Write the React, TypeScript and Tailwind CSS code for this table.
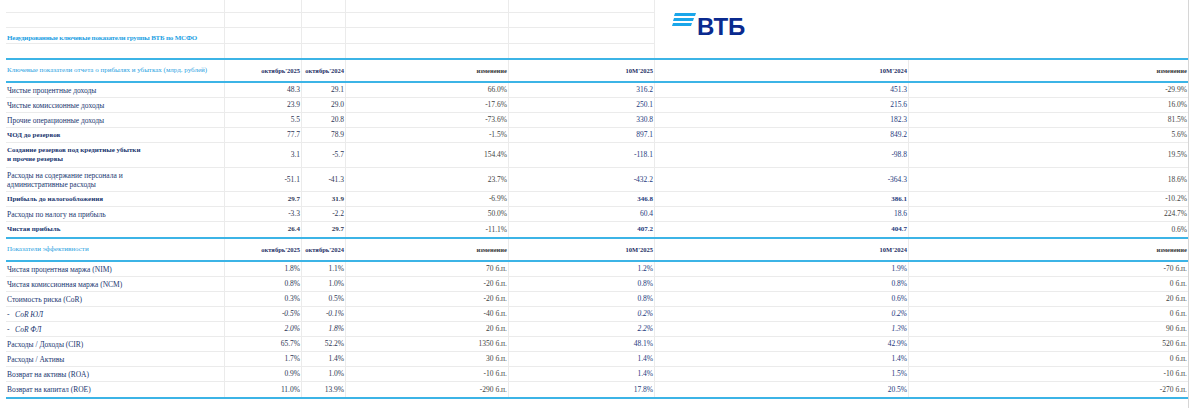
import React from "react";

type Row = {
  label: string[];
  v: string[];
  bold?: boolean;
  boldVals?: boolean;
  italic?: boolean;
  h?: string;
};

const GRID = "grid grid-cols-[219px_77px_44px_163px_146px_254px_279px]";
const LINE = "border-[#ebebeb]";
const BLUE = "border-[#3cb4e6]";

const income: Row[] = [
  { label: ["Чистые процентные доходы"], v: ["48.3", "29.1", "66.0%", "316.2", "451.3", "-29.9%"] },
  { label: ["Чистые комиссионные доходы"], v: ["23.9", "29.0", "-17.6%", "250.1", "215.6", "16.0%"] },
  { label: ["Прочие операционные доходы"], v: ["5.5", "20.8", "-73.6%", "330.8", "182.3", "81.5%"] },
  { label: ["ЧОД до резервов"], v: ["77.7", "78.9", "-1.5%", "897.1", "849.2", "5.6%"], bold: true },
  {
    label: ["Создание резервов под кредитные убытки", "и прочие резервы"],
    v: ["3.1", "-5.7", "154.4%", "-118.1", "-98.8", "19.5%"],
    bold: true,
    h: "h-[25px]",
  },
  {
    label: ["Расходы на содержание персонала и", "административные расходы"],
    v: ["-51.1", "-41.3", "23.7%", "-432.2", "-364.3", "18.6%"],
    h: "h-[24px]",
  },
  { label: ["Прибыль до налогообложения"], v: ["29.7", "31.9", "-6.9%", "346.8", "386.1", "-10.2%"], bold: true, boldVals: true },
  { label: ["Расходы по налогу на прибыль"], v: ["-3.3", "-2.2", "50.0%", "60.4", "18.6", "224.7%"] },
  { label: ["Чистая прибыль"], v: ["26.4", "29.7", "-11.1%", "407.2", "404.7", "0.6%"], bold: true, boldVals: true },
];

const ratios: Row[] = [
  { label: ["Чистая процентная маржа (NIM)"], v: ["1.8%", "1.1%", "70 б.п.", "1.2%", "1.9%", "-70 б.п."] },
  { label: ["Чистая комиссионная маржа (NCM)"], v: ["0.8%", "1.0%", "-20 б.п.", "0.8%", "0.8%", "0 б.п."] },
  { label: ["Стоимость риска (CoR)"], v: ["0.3%", "0.5%", "-20 б.п.", "0.8%", "0.6%", "20 б.п."] },
  { label: ["-   CoR ЮЛ"], v: ["-0.5%", "-0.1%", "-40 б.п.", "0.2%", "0.2%", "0 б.п."], italic: true },
  { label: ["-   CoR ФЛ"], v: ["2.0%", "1.8%", "20 б.п.", "2.2%", "1.3%", "90 б.п."], italic: true },
  { label: ["Расходы / Доходы (CIR)"], v: ["65.7%", "52.2%", "1350 б.п.", "48.1%", "42.9%", "520 б.п."] },
  { label: ["Расходы / Активы"], v: ["1.7%", "1.4%", "30 б.п.", "1.4%", "1.4%", "0 б.п."] },
  { label: ["Возврат на активы (ROA)"], v: ["0.9%", "1.0%", "-10 б.п.", "1.4%", "1.5%", "-10 б.п."] },
  { label: ["Возврат на капитал (ROE)"], v: ["11.0%", "13.9%", "-290 б.п.", "17.8%", "20.5%", "-270 б.п."] },
];

// colour per value column: B, C, D, E, F, G
const valColour = ["text-[#2e3654]", "text-[#2e3654]", "text-[#3f3f3f]", "text-[#24387c]", "text-[#24387c]", "text-[#3f3f3f]"];

function VtbLogo() {
  return (
    <div className="flex items-start pl-[17px]">
      <svg width="24" height="14" viewBox="0 0 24 14" className="mt-[13px]">
        <polygon points="3,0 24,0 23,3 2,3" fill="#1aa6ea" />
        <polygon points="2,5 22,5 21,8 1,8" fill="#1aa6ea" />
        <polygon points="1,10 20,10 19,13 0,13" fill="#1aa6ea" />
      </svg>
      <span className="ml-[1px] mt-[15px] font-['Liberation_Sans',sans-serif] text-[24px] font-bold leading-none text-[#0a2a8f]">
        ВТБ
      </span>
    </div>
  );
}

function Header({ title }: { title: string }) {
  const heads = ["октябрь'2025", "октябрь'2024", "изменение", "10М'2025", "10М'2024", "изменение"];
  return (
    <div className={`${GRID} h-[25px] border-t-2 border-b-2 ${BLUE}`}>
      <div className={`flex items-center pl-[1px] border-r ${LINE} whitespace-nowrap text-[7px] text-[#2aa2df]`}>{title}</div>
      {heads.map((h, i) => (
        <div
          key={i}
          className={`flex items-center justify-end pr-[1px] font-bold whitespace-nowrap text-[6.5px] ${i < 5 ? `border-r ${LINE}` : ""} ${
            i == 2 || i == 5 ? "text-[#3a3a3a]" : "text-[#1f2f66]"
          }`}
        >
          {h}
        </div>
      ))}
    </div>
  );
}

function DataRow({ row, last }: { row: Row; last: boolean }) {
  return (
    <div className={`${GRID} ${row.h ?? "h-[15px]"} ${last ? "" : `border-b ${LINE}`}`}>
      <div
        className={`flex flex-col justify-center pl-[1px] border-r ${LINE} whitespace-pre leading-[9px] text-[#203670] ${
          row.bold ? "font-bold text-[7px]" : ""
        } ${row.italic ? "italic" : ""}`}
      >
        {row.label.map((l, i) => (
          <span key={i}>{l}</span>
        ))}
      </div>
      {row.v.map((v, i) => {
        const main = i != 2 && i != 5;
        return (
          <div
            key={i}
            className={`flex items-center justify-end pr-[1px] whitespace-nowrap ${valColour[i]} ${i < 5 ? `border-r ${LINE}` : ""} ${
              main && row.boldVals ? "font-bold text-[7px]" : ""
            } ${main && row.italic ? "italic" : ""}`}
          >
            {v}
          </div>
        );
      })}
    </div>
  );
}

export default function App() {
  const topRows = ["h-[13px]", "h-[15px]", "h-[16px]", "h-[14px]"];

  return (
    <div className="h-[408px] w-[1200px] bg-white font-['Liberation_Serif',serif] text-[7.5px]">
      <div className="h-full w-[1189px] border-r border-[#d6d6d6] pl-[6px]">
        {/* top block with title and logo */}
        <div className="flex h-[58px]">
          <div className="w-[649px]">
            {topRows.map((h, r) => (
              <div
                key={r}
                className={`grid grid-cols-[219px_77px_44px_163px_146px] ${h} ${r < 3 ? `border-b ${LINE}` : ""}`}
              >
                <div
                  className={`flex items-end pb-[1px] pl-[1px] border-r ${LINE} whitespace-nowrap font-bold text-[7px] leading-none tracking-[-0.2px] text-[#1e9fe3]`}
                >
                  {r == 2 ? "Неаудированные ключевые показатели группы ВТБ по МСФО" : ""}
                </div>
                <div className={`border-r ${LINE}`} />
                <div className={`border-r ${LINE}`} />
                <div className={`border-r ${LINE}`} />
                <div className={`border-r ${LINE}`} />
              </div>
            ))}
          </div>
          <div className="w-[533px]">
            <VtbLogo />
          </div>
        </div>

        <Header title="Ключевые показатели отчета о прибылях и убытках (млрд. рублей)" />
        {income.map((row, i) => (
          <DataRow key={i} row={row} last={i == income.length - 1} />
        ))}

        <Header title="Показатели эффективности" />
        {ratios.map((row, i) => (
          <DataRow key={i} row={row} last={i == ratios.length - 1} />
        ))}
        <div className={`border-t-2 ${BLUE}`} />
      </div>
    </div>
  );
}
